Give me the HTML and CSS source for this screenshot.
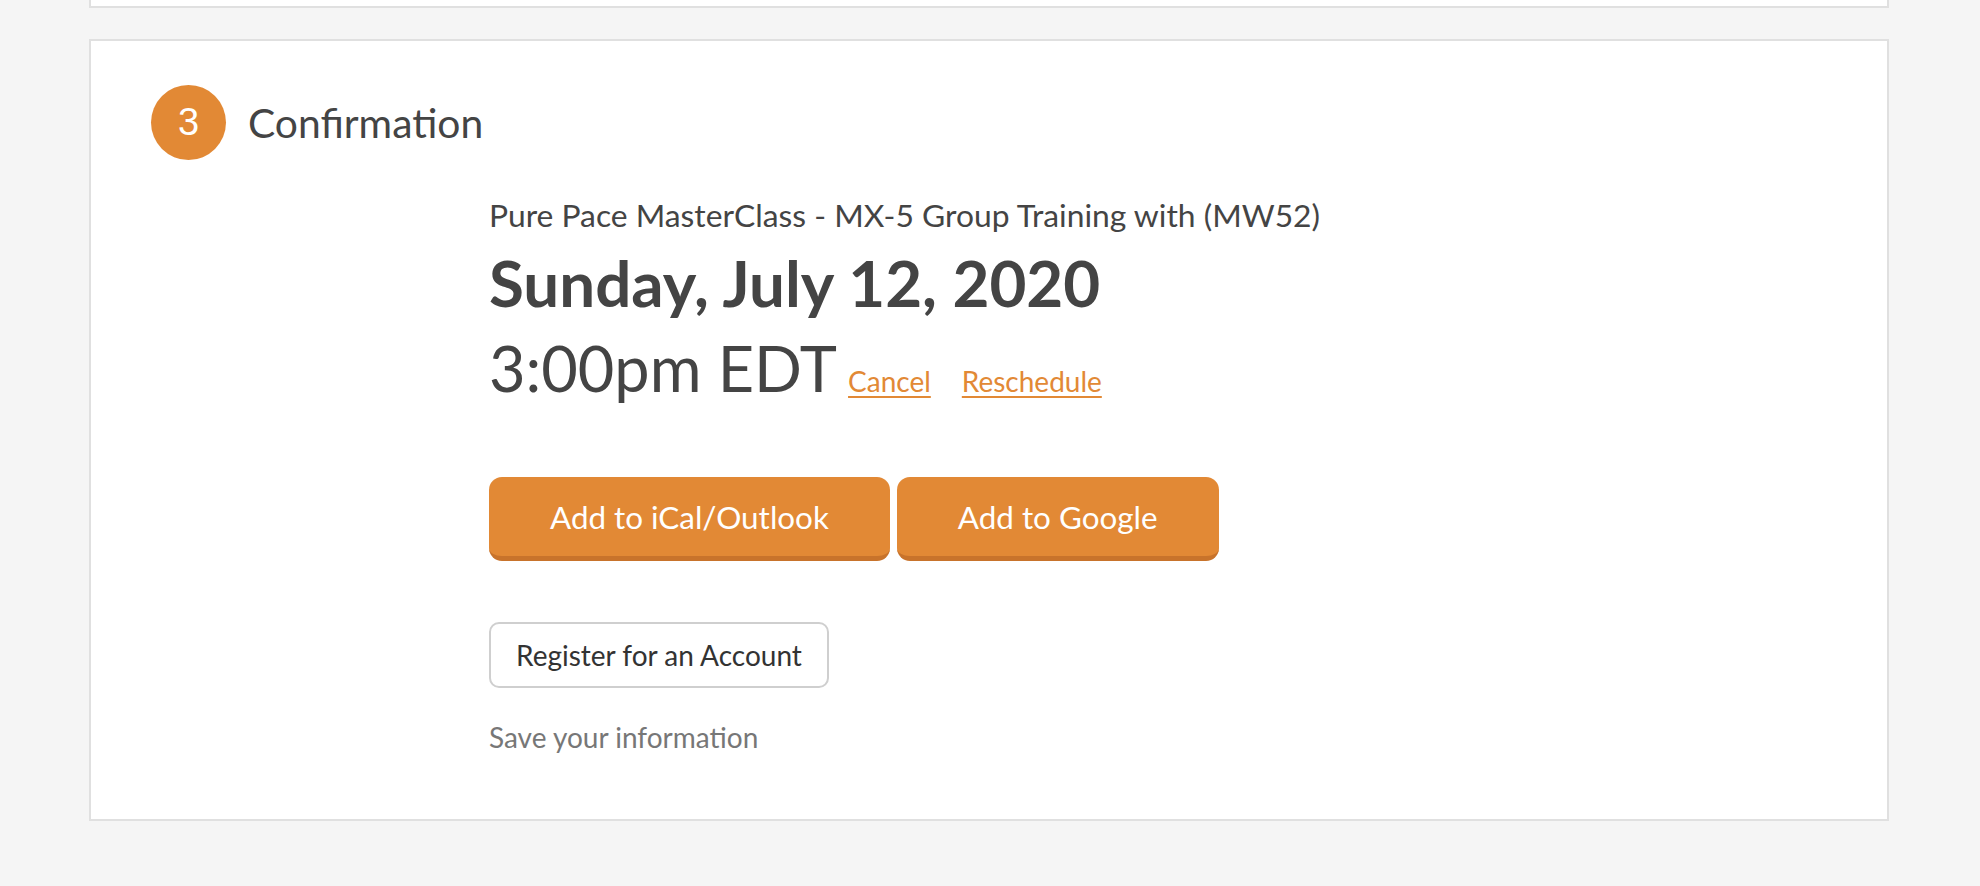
FILE: index.html
```html
<!DOCTYPE html>
<html lang="en">
<head>
<meta charset="utf-8">
<title>Confirmation</title>
<link rel="stylesheet" href="styles.css">
</head>
<body>
<div class="page">
  <div class="prev-card"></div>
  <section class="card">
    <header class="step-header">
      <div class="step-num">3</div>
      <h2 class="step-title">Confirmation</h2>
    </header>
    <div class="content">
      <div class="event-name">Pure Pace MasterClass - MX-5 Group Training with (MW52)</div>
      <div class="event-date">Sunday, July 12, 2020</div>
      <div class="event-time">
        <span class="time">3:00pm EDT</span>
        <a class="link link-cancel" href="#">Cancel</a>
        <a class="link link-resched" href="#">Reschedule</a>
      </div>
      <div class="cal-buttons">
        <a class="btn-orange" href="#">Add to iCal/Outlook</a>
        <a class="btn-orange" href="#">Add to Google</a>
      </div>
      <div class="register">
        <a class="btn-outline" href="#">Register for an Account</a>
      </div>
      <div class="save-info">Save your information</div>
    </div>
  </section>
</div>
</body>
</html>
```

FILE: styles.css
```css
html, body {
  margin: 0;
  padding: 0;
}
body {
  background: #f5f5f5;
  font-family: "Lato", "Open Sans", sans-serif;
  color: #444;
}
.page {
  width: 1800px;
  margin: 0 0 0 89px;
}
.prev-card {
  height: 6px;
  background: #fff;
  border: 2px solid #e0e0e0;
  border-top: none;
}
.card {
  margin-top: 31px;
  background: #fff;
  border: 2px solid #e0e0e0;
  padding: 44px 0 65px 0;
}
.step-header {
  display: flex;
  align-items: center;
  padding-left: 60px;
  height: 75px;
}
.step-num {
  width: 75px;
  height: 75px;
  border-radius: 50%;
  background: #e28935;
  color: #fff;
  font-family: "Liberation Sans", Arial, sans-serif;
  font-size: 38px;
  display: flex;
  align-items: center;
  justify-content: center;
}
.step-title {
  margin: 0 0 0 22px;
  font-size: 40.8px;
  font-weight: 400;
  color: #444;
}
.content {
  width: 1000px;
  margin: 40px auto 0 auto;
}
.event-name {
  font-size: 31.8px;
  line-height: 30px;
  color: #444;
}
.event-date {
  margin-top: 26px;
  font-size: 63.7px;
  line-height: 54px;
  font-weight: 700;
  color: #444;
}
.event-time {
  display: flex;
  align-items: baseline;
  margin-top: 26px;
  line-height: 64px;
}
.time {
  font-size: 63px;
  color: #444;
}
.link {
  font-size: 28px;
  color: #e28935;
  text-decoration: underline;
  text-underline-offset: 4px;
}
.link-cancel {
  margin-left: 11px;
}
.link-resched {
  margin-left: 31px;
}
.cal-buttons {
  display: flex;
  gap: 7px;
  margin-top: 64px;
}
.btn-orange {
  box-sizing: border-box;
  height: 84px;
  padding: 0 61px;
  display: flex;
  align-items: center;
  justify-content: center;
  background: #e28935;
  border-bottom: 5px solid #c8732b;
  border-radius: 13px;
  color: #fff;
  font-size: 31.4px;
  text-decoration: none;
}
.register {
  margin-top: 61px;
  display: flex;
}
.btn-outline {
  box-sizing: border-box;
  height: 66px;
  padding: 0 25px;
  display: flex;
  align-items: center;
  border: 2px solid #cfcfcf;
  border-radius: 10px;
  color: #333;
  font-size: 28px;
  text-decoration: none;
}
.save-info {
  margin-top: 32px;
  font-size: 28px;
  line-height: 34px;
  color: #777;
}
```
